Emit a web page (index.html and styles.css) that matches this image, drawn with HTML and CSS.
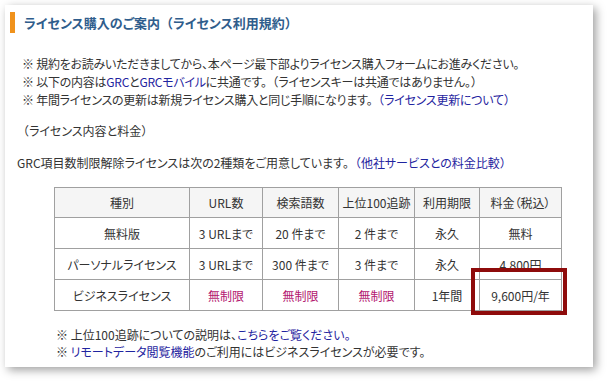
FILE: index.html
```html
<!DOCTYPE html>
<html lang="ja">
<head>
<meta charset="utf-8">
<link rel="stylesheet" href="styles.css">
</head>
<body>
<div class="page">
  <div class="card">
    <h1 class="heading">ライセンス購入のご案内<span class="fw">（</span>ライセンス利用規約<span class="fw">）</span></h1>
    <div class="content">
      <p class="notes">
        ※ 規約をお読みいただきましてから、本ページ最下部よりライセンス購入フォームにお進みください。<br>
        ※ 以下の内容は<a href="#">GRC</a>と<a href="#">GRCモバイル</a>に共通です。<span class="fw">（</span>ライセンスキーは共通ではありません。<span class="fw">）</span><br>
        ※ 年間ライセンスの更新は新規ライセンス購入と同じ手順になります。<a href="#"><span class="fw">（</span>ライセンス更新について<span class="fw">）</span></a>
      </p>
      <p class="label"><span class="fw">（</span>ライセンス内容と料金<span class="fw">）</span></p>
      <p class="intro">GRC項目数制限解除ライセンスは次の2種類をご用意しています。<a href="#"><span class="fw">（</span>他社サービスとの料金比較<span class="fw">）</span></a></p>
      <div class="table-wrap">
        <table class="price">
          <colgroup>
            <col class="c1"><col class="c2"><col class="c3"><col class="c4"><col class="c5"><col class="c6">
          </colgroup>
          <tr class="head">
            <th>種別</th><th>URL数</th><th>検索語数</th><th>上位100追跡</th><th>利用期限</th><th>料金（税込）</th>
          </tr>
          <tr class="r2">
            <td>無料版</td><td>3 URLまで</td><td>20 件まで</td><td>2 件まで</td><td>永久</td><td>無料</td>
          </tr>
          <tr class="r3">
            <td>パーソナルライセンス</td><td>3 URLまで</td><td>300 件まで</td><td>3 件まで</td><td>永久</td><td>4,800円</td>
          </tr>
          <tr class="r4">
            <td>ビジネスライセンス</td><td class="unl">無制限</td><td class="unl">無制限</td><td class="unl">無制限</td><td>1年間</td><td>9,600円/年</td>
          </tr>
        </table>
        <div class="highlight"></div>
      </div>
      <p class="foot">
        ※ 上位100追跡についての説明は、<a href="#">こちらをご覧ください。</a><br>
        ※ <a href="#">リモートデータ閲覧機能</a>のご利用にはビジネスライセンスが必要です。
      </p>
    </div>
  </div>
</div>
</body>
</html>
```

FILE: styles.css
```css
html, body {
  margin: 0;
  padding: 0;
  background: #ffffff;
}

body {
  font-family: "Noto Sans CJK JP", "Noto Sans", sans-serif;
  font-size: 12px;
  color: #333333;
  font-feature-settings: "palt";
  text-spacing-trim: space-all;
}

.fw {
  font-feature-settings: normal;
}

.page {
  padding: 5px 15px 16px 5px;
}

.card {
  width: 588px;
  height: 362px;
  box-sizing: border-box;
  background: #ffffff;
  box-shadow: 3px 3px 9px rgba(0, 0, 0, 0.38);
  padding-top: 7px;
}

.heading {
  margin: 0 0 0 5px;
  border-left: 5px solid #f0921c;
  padding-left: 9px;
  height: 21px;
  line-height: 21px;
  font-size: 13px;
  font-weight: bold;
  color: #2f5d8c;
}

.content {
  padding-left: 19px;
}

p {
  margin: 0;
}

a {
  color: #1f24a0;
  text-decoration: none;
}

.notes {
  margin: 22px 0 0 -2px;
  line-height: 18px;
  letter-spacing: -0.25px;
}

.label {
  margin: 13px 0 0 -7px;
  line-height: 18px;
}

.intro {
  margin: 14px 0 0 -7px;
  line-height: 18px;
}

.table-wrap {
  position: relative;
  margin: 15px 0 0 30px;
  width: 507px;
}

.price {
  border-collapse: collapse;
  table-layout: fixed;
  width: 507px;
}

.c1 { width: 135px; }
.c2 { width: 73px; }
.c3 { width: 76px; }
.c4 { width: 76px; }
.c5 { width: 65px; }
.c6 { width: 82px; }

.price th,
.price td {
  border: 1px solid #a0a0a0;
  text-align: center;
  font-weight: normal;
  padding: 0;
  color: #333333;
  white-space: nowrap;
}

.price .head th {
  background: #f5f5f5;
  height: 29px;
}

.price .r2 td,
.price .r3 td,
.price .r4 td {
  height: 30px;
}

.price td.unl {
  color: #b3176f;
}

.highlight {
  position: absolute;
  left: 417px;
  top: 81px;
  width: 96px;
  height: 47px;
  box-sizing: border-box;
  border: 4px solid #8e0b0b;
}

.foot {
  margin: 15px 0 0 32px;
  line-height: 17px;
}
```
